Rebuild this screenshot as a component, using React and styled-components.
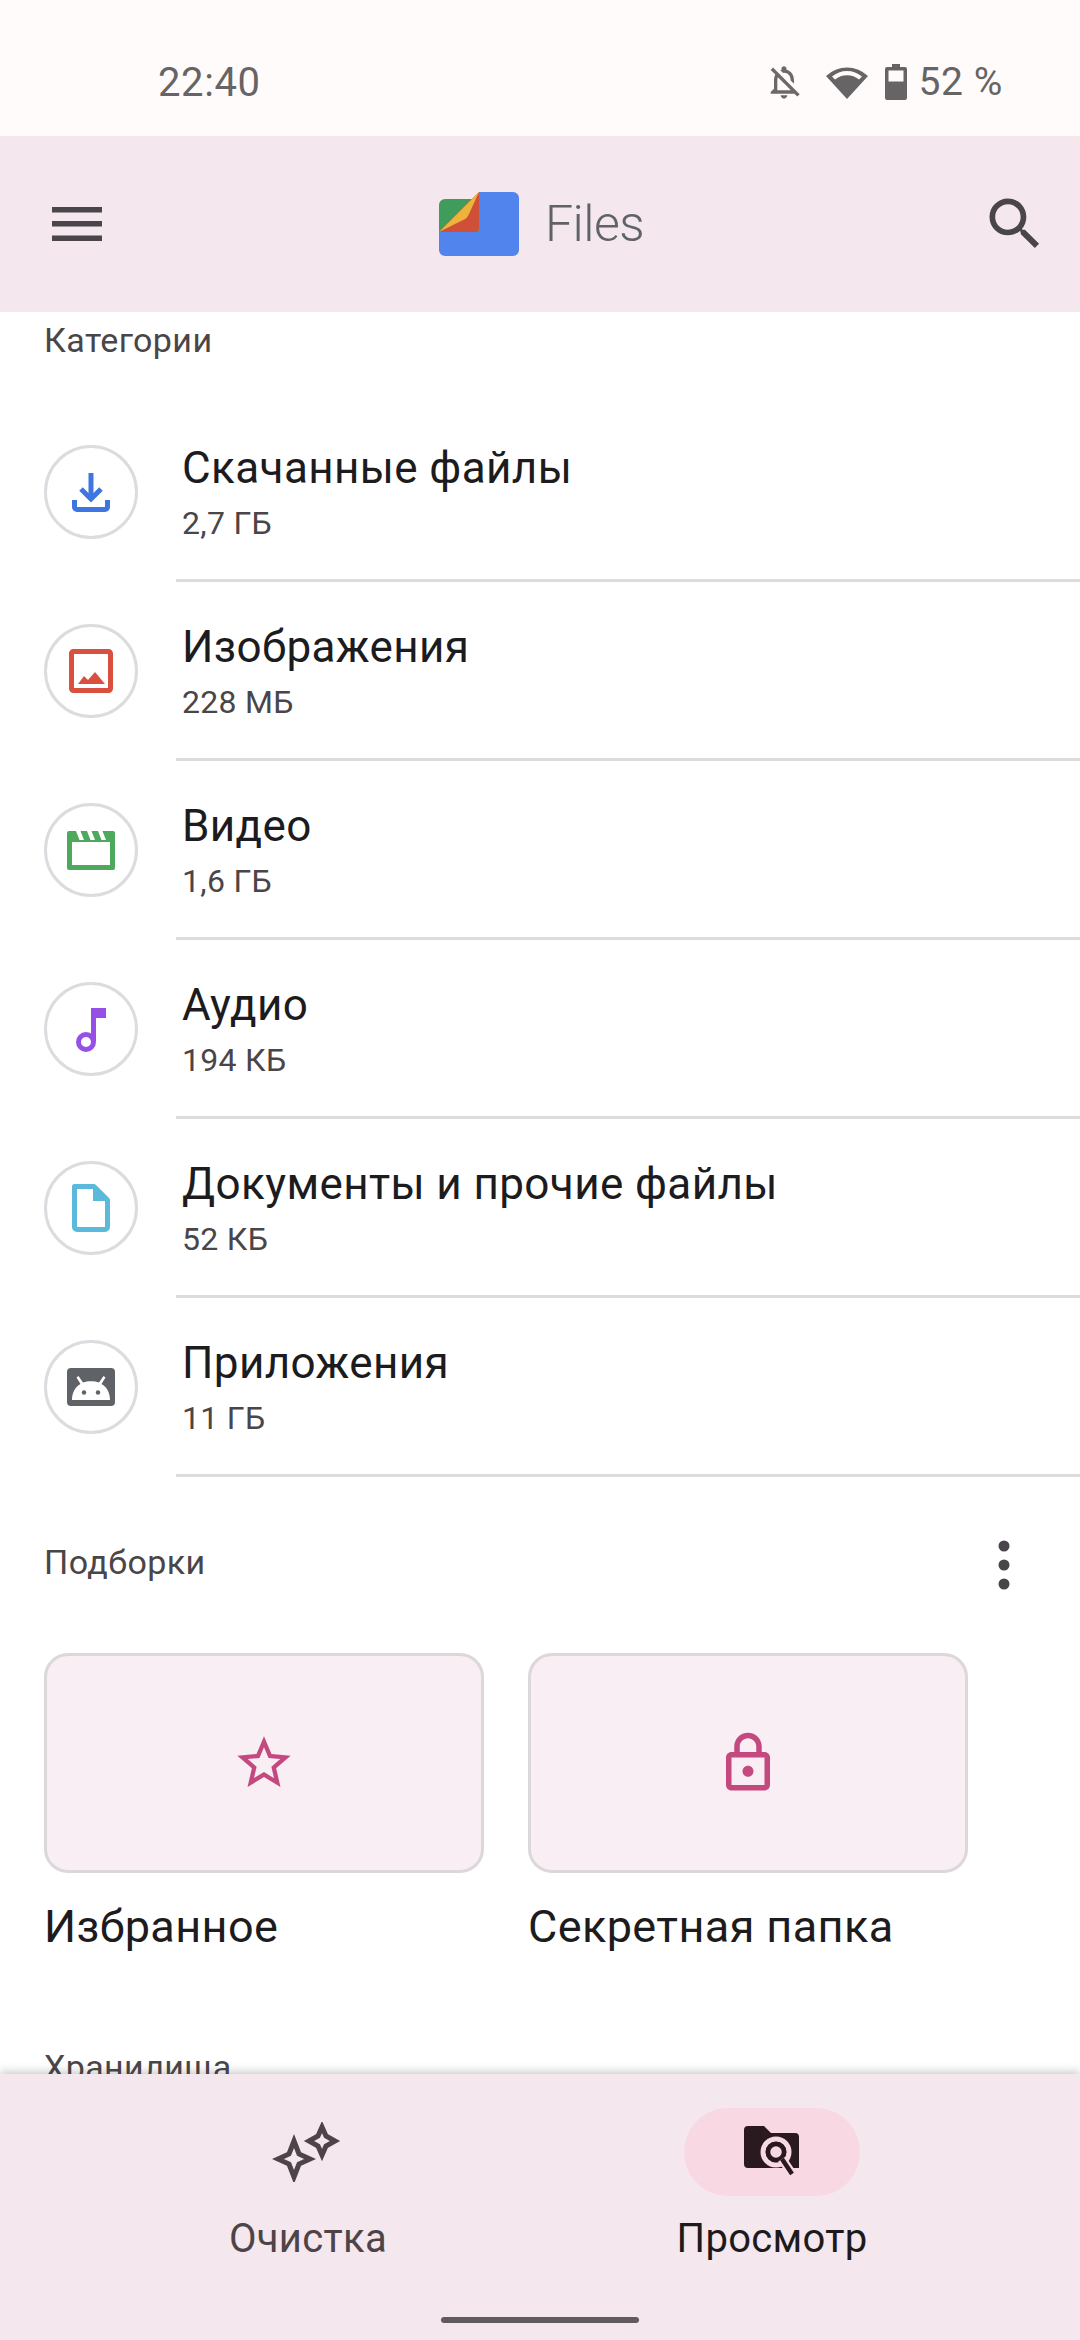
import React from "react";
import styled, { createGlobalStyle } from "styled-components";

const GlobalStyle = createGlobalStyle`
  html, body {
    margin: 0;
    padding: 0;
    background: #fff;
  }
  * {
    box-sizing: border-box;
  }
`;

const Screen = styled.div`
  width: 1080px;
  height: 2340px;
  display: flex;
  flex-direction: column;
  overflow: hidden;
  font-family: Roboto, "Noto Sans", sans-serif;
  background: #fff;
`;

const StatusBar = styled.div`
  height: 136px;
  flex: none;
  display: flex;
  align-items: center;
  justify-content: space-between;
  padding: 28px 77px 0 158px;
  background: #fffbfa;
  color: #666464;
`;

const Clock = styled.span`
  font-size: 40px;
  letter-spacing: 0.6px;
`;

const StatusIcons = styled.div`
  display: flex;
  align-items: center;
`;

const BatteryText = styled.span`
  font-size: 39px;
  margin-left: 12px;
  letter-spacing: 0.6px;
`;

const AppBar = styled.header`
  height: 176px;
  flex: none;
  display: flex;
  align-items: center;
  justify-content: space-between;
  padding: 0 31px 0 52px;
  background: #f4e7ee;
`;

const Brand = styled.div`
  display: flex;
  align-items: center;
  gap: 26px;
`;

const BrandName = styled.span`
  font-size: 50px;
  font-weight: 300;
  color: #5f6368;
  letter-spacing: -0.6px;
`;

const Content = styled.main`
  flex: 1;
  min-height: 0;
  overflow: hidden;
`;

const SectionLabel = styled.div`
  height: ${(p) => p.$height}px;
  padding: ${(p) => p.$top}px 44px 0;
  font-size: 34px;
  line-height: 44px;
  color: #4a4548;
  letter-spacing: 0.4px;
`;

const MoreRow = styled.div`
  height: 176px;
  display: flex;
  justify-content: space-between;
  padding: 63px 69px 0 44px;
  font-size: 34px;
  line-height: 44px;
  color: #4a4548;
  letter-spacing: 0.4px;
`;

const Row = styled.div`
  height: 179px;
  display: flex;
  align-items: stretch;
  padding-left: 44px;
`;

const IconCircle = styled.div`
  width: 94px;
  height: 94px;
  margin-top: 42px;
  margin-right: 38px;
  flex: none;
  display: flex;
  align-items: center;
  justify-content: center;
  border: 3px solid #dcdce0;
  border-radius: 50%;
`;

const RowBody = styled.div`
  flex: 1;
  padding: 37px 0 0 6px;
  border-bottom: 3px solid #dcdcdc;
`;

const RowTitle = styled.div`
  font-size: 44px;
  line-height: 56px;
  color: #1c1b1d;
  letter-spacing: 0.4px;
`;

const RowSize = styled.div`
  margin-top: 6px;
  font-size: 32px;
  line-height: 42px;
  color: #4a4548;
  letter-spacing: 0.3px;
`;

const Cards = styled.div`
  display: flex;
  gap: 44px;
  padding-left: 44px;
`;

const CardColumn = styled.div`
  width: 440px;
`;

const Card = styled.div`
  height: 220px;
  display: flex;
  align-items: center;
  justify-content: center;
  background: #f8eef3;
  border: 3px solid #dcd8da;
  border-radius: 24px;
`;

const CardCaption = styled.div`
  margin-top: 26px;
  font-size: 45px;
  line-height: 56px;
  color: #1c1b1d;
  letter-spacing: 0.4px;
`;

const BottomNav = styled.nav`
  height: 266px;
  flex: none;
  position: relative;
  display: grid;
  grid-template-columns: 464px 464px;
  justify-content: center;
  padding-top: 34px;
  background: #f4e7ee;
  box-shadow: 0 -2px 9px rgba(40, 50, 50, 0.28);
`;

const NavItem = styled.div`
  display: flex;
  flex-direction: column;
  align-items: center;
`;

const NavPill = styled.div`
  width: 176px;
  height: 88px;
  display: flex;
  align-items: center;
  justify-content: center;
  border-radius: 44px;
  background: ${(p) => (p.$active ? "#f7d8e3" : "transparent")};
`;

const NavLabel = styled.span`
  margin-top: 18px;
  font-size: 40px;
  line-height: 50px;
  letter-spacing: 0.3px;
  color: ${(p) => (p.$active ? "#1d1a1c" : "#4e4448")};
`;

const HomeBar = styled.div`
  position: absolute;
  left: 441px;
  bottom: 17px;
  width: 198px;
  height: 6px;
  border-radius: 3px;
  background: #625b5e;
`;

const WifiIcon = styled.svg`
  margin-left: 22px;
`;

const BatteryIcon = styled.svg`
  margin-left: 17px;
`;

const BellOff = () => (
  <svg width="40" height="40" viewBox="0 0 24 24" fill="#6b6969">
    <path d="M12 22c1.1 0 2-.9 2-2h-4c0 1.1.9 2 2 2zm0-15.5c2.49 0 4 2.02 4 4.5v.1l2 2V11c0-3.07-1.63-5.64-4.5-6.32V4c0-.83-.67-1.5-1.5-1.5s-1.5.67-1.5 1.5v.68c-.24.06-.47.15-.69.23l1.64 1.64c.18-.02.36-.05.55-.05zM5.41 3.35L4 4.76l2.81 2.81C6.29 8.57 6 9.74 6 11v5l-2 2v1h14.24l1.74 1.74 1.41-1.41L5.41 3.35zM16 17H8v-6c0-.68.12-1.32.34-1.9L16 16.76V17z" />
  </svg>
);

const Wifi = () => (
  <WifiIcon width="42" height="36" viewBox="0 0 42 36">
    <path d="M21 35 L0 12 A30 30 0 0 1 42 12 Z" fill="#666464" />
    <path d="M6 12.5 A23 23 0 0 1 36 12.5 L33 15.5 A19 19 0 0 0 9 15.5 Z" fill="#fffbfa" />
  </WifiIcon>
);

const Battery = () => (
  <BatteryIcon width="22" height="36" viewBox="0 0 22 36">
    <path d="M7 0h8v3h5a2 2 0 0 1 2 2v29a2 2 0 0 1-2 2H2a2 2 0 0 1-2-2V5a2 2 0 0 1 2-2h5z" fill="#666464" />
    <rect x="3.5" y="6.5" width="15" height="11" fill="#fffbfa" />
  </BatteryIcon>
);

const MenuIcon = () => (
  <svg width="50" height="34" viewBox="0 0 50 34" fill="#49454a">
    <rect width="50" height="5.5" />
    <rect y="14" width="50" height="5.5" />
    <rect y="28.5" width="50" height="5.5" />
  </svg>
);

// Document with the corner folded over, in the product colours
const FilesLogo = () => (
  <svg width="80" height="64" viewBox="0 0 80 64">
    <path d="M0 40V13a6 6 0 0 1 6-6h30l4 33z" fill="#3f9c5b" />
    <path d="M40 0H74a6 6 0 0 1 6 6V58a6 6 0 0 1-6 6H6a6 6 0 0 1-6-6V40H40z" fill="#5284ee" />
    <path d="M40 0V36a4 4 0 0 1-4 4H0z" fill="#cf4f38" />
    <path d="M0 40L40 0 30 22q-2 5-7 6.500z" fill="#edb33a" />
  </svg>
);

const SearchIcon = () => (
  <svg width="68" height="68" viewBox="0 0 24 24" fill="#49454a">
    <path d="M15.5 14h-.79l-.28-.27C15.41 12.59 16 11.11 16 9.5 16 5.91 13.09 3 9.5 3S3 5.91 3 9.5 5.91 16 9.5 16c1.61 0 3.09-.59 4.23-1.57l.27.28v.79l5 4.99L20.49 19l-4.99-5zm-6 0C7.01 14 5 11.99 5 9.5S7.01 5 9.5 5 14 7.01 14 9.5 11.99 14 9.5 14z" />
  </svg>
);

const CategoryIcon = ({ children }) => (
  <svg width="60" height="60" viewBox="0 0 60 60">
    {children}
  </svg>
);

const DownloadGlyph = () => (
  <CategoryIcon>
    <g fill="none" stroke="#3e75e0" strokeWidth="5">
      <path d="M30 11V38" />
      <path d="M20 27L30 37 40 27" />
      <path d="M13.500 38V45a2.500 2.500 0 0 0 2.500 2.500H44a2.500 2.500 0 0 0 2.500-2.500V38" />
    </g>
  </CategoryIcon>
);

const ImageGlyph = () => (
  <CategoryIcon>
    <rect x="10.500" y="10.500" width="39" height="39" rx="2" fill="none" stroke="#d9503f" strokeWidth="5" />
    <path d="M17 43l6-8 4 4 7-8 10 12z" fill="#d9503f" />
  </CategoryIcon>
);

const VideoGlyph = () => (
  <CategoryIcon>
    <path d="M8 11h44a2 2 0 0 1 2 2v35a2 2 0 0 1-2 2H8a2 2 0 0 1-2-2V13a2 2 0 0 1 2-2z" fill="#4fa95c" />
    <rect x="11" y="22" width="38" height="23" fill="#fff" />
    <path d="M15 11l3.500 9h4.500l-3.500-9zM26 11l3.500 9h4.500l-3.500-9zM37 11l3.500 9h4.500l-3.500-9z" fill="#fff" />
  </CategoryIcon>
);

const AudioGlyph = () => (
  <CategoryIcon>
    <path d="M30 9H45V19H35V42H30z" fill="#9650e6" />
    <circle cx="25" cy="43" r="7.500" fill="none" stroke="#9650e6" strokeWidth="5" />
  </CategoryIcon>
);

const DocGlyph = () => (
  <CategoryIcon>
    <path d="M13.500 8.500H33L46.500 22V49a2.500 2.500 0 0 1-2.500 2.500H16a2.500 2.500 0 0 1-2.500-2.500z" fill="none" stroke="#5bb9dc" strokeWidth="5" strokeLinejoin="round" />
    <path d="M32 8L47 23H32z" fill="#5bb9dc" />
  </CategoryIcon>
);

const AndroidGlyph = () => (
  <CategoryIcon>
    <rect x="6" y="11" width="48" height="38" rx="4" fill="#5f6368" />
    <path d="M11 43C11 36 14 30 19.500 27L15.500 20.500 17.500 19 22 25.500C26.500 23.800 33.500 23.800 38 25.500L42.500 19 44.500 20.500 40.500 27C46 30 49 36 49 43z" fill="#fff" />
    <circle cx="23" cy="35.500" r="2.200" fill="#5f6368" />
    <circle cx="37" cy="35.500" r="2.200" fill="#5f6368" />
  </CategoryIcon>
);

const MoreDots = () => (
  <svg width="14" height="50" viewBox="0 0 14 50" fill="#49454a">
    <circle cx="7" cy="6" r="5.500" />
    <circle cx="7" cy="25" r="5.500" />
    <circle cx="7" cy="44" r="5.500" />
  </svg>
);

const StarOutline = () => (
  <svg width="64" height="64" viewBox="0 0 24 24" fill="#c4497f">
    <path d="M22 9.240l-7.190-.620L12 2 9.190 8.630 2 9.240l5.460 4.730L5.820 21 12 17.270 18.180 21l-1.630-7.030L22 9.240zM12 15.400l-3.760 2.270 1-4.280-3.320-2.880 4.380-.380L12 6.100l1.710 4.040 4.380.380-3.320 2.880 1 4.280L12 15.400z" />
  </svg>
);

const LockOutline = () => (
  <svg width="66" height="66" viewBox="0 0 24 24" fill="#c4497f">
    <path d="M18 8h-1V6c0-2.760-2.240-5-5-5S7 3.240 7 6v2H6c-1.100 0-2 .9-2 2v10c0 1.100.9 2 2 2h12c1.100 0 2-.9 2-2V10c0-1.100-.9-2-2-2zM9 6c0-1.660 1.340-3 3-3s3 1.340 3 3v2H9V6zm9 14H6V10h12v10zm-6-3c1.100 0 2-.9 2-2s-.9-2-2-2-2 .9-2 2 .9 2 2 2z" />
  </svg>
);

const Sparkles = () => (
  <svg width="72" height="60" viewBox="0 0 72 60" fill="none" stroke="#4e4448" strokeWidth="5" strokeLinejoin="miter">
    <path d="M22 19L27 32 38 37 27 42 22 55 17 42 6 37 17 32z" />
    <path d="M50 5L54 14 63 19 54 24 50 33 46 24 37 19 46 14z" />
  </svg>
);

const FolderSearch = () => (
  <svg width="56" height="52" viewBox="0 0 56 52">
    <path d="M4 0H20L27 7H51a4 4 0 0 1 4 4V42H4a4 4 0 0 1-4-4V4a4 4 0 0 1 4-4z" fill="#2a1a20" />
    <circle cx="32" cy="26" r="13" fill="none" stroke="#f7d8e3" strokeWidth="5" />
    <circle cx="32" cy="26" r="9" fill="#f7d8e3" />
    <circle cx="32" cy="26" r="8" fill="none" stroke="#2a1a20" strokeWidth="4.500" />
    <path d="M38 33L48 48" stroke="#f7d8e3" strokeWidth="9" />
    <path d="M38 33L48 48" stroke="#2a1a20" strokeWidth="4.500" />
  </svg>
);

const categories = [
  { title: "Скачанные файлы", size: "2,7 ГБ", Icon: DownloadGlyph },
  { title: "Изображения", size: "228 МБ", Icon: ImageGlyph },
  { title: "Видео", size: "1,6 ГБ", Icon: VideoGlyph },
  { title: "Аудио", size: "194 КБ", Icon: AudioGlyph },
  { title: "Документы и прочие файлы", size: "52 КБ", Icon: DocGlyph },
  { title: "Приложения", size: "11 ГБ", Icon: AndroidGlyph },
];

const App = () => {
  return (
    <Screen>
      <GlobalStyle />
      <StatusBar>
        <Clock>22:40</Clock>
        <StatusIcons>
          <BellOff />
          <Wifi />
          <Battery />
          <BatteryText>52 %</BatteryText>
        </StatusIcons>
      </StatusBar>
      <AppBar>
        <MenuIcon />
        <Brand>
          <FilesLogo />
          <BrandName>Files</BrandName>
        </Brand>
        <SearchIcon />
      </AppBar>
      <Content>
        <SectionLabel $height={91} $top={6}>Категории</SectionLabel>
        {categories.map(({ title, size, Icon }) => (
          <Row key={title}>
            <IconCircle>
              <Icon />
            </IconCircle>
            <RowBody>
              <RowTitle>{title}</RowTitle>
              <RowSize>{size}</RowSize>
            </RowBody>
          </Row>
        ))}
        <MoreRow>
          <span>Подборки</span>
          <MoreDots />
        </MoreRow>
        <Cards>
          <CardColumn>
            <Card>
              <StarOutline />
            </Card>
            <CardCaption>Избранное</CardCaption>
          </CardColumn>
          <CardColumn>
            <Card>
              <LockOutline />
            </Card>
            <CardCaption>Секретная папка</CardCaption>
          </CardColumn>
        </Cards>
        <SectionLabel $height={110} $top={90}>Хранилища</SectionLabel>
      </Content>
      <BottomNav>
        <NavItem>
          <NavPill>
            <Sparkles />
          </NavPill>
          <NavLabel>Очистка</NavLabel>
        </NavItem>
        <NavItem>
          <NavPill $active>
            <FolderSearch />
          </NavPill>
          <NavLabel $active>Просмотр</NavLabel>
        </NavItem>
        <HomeBar />
      </BottomNav>
    </Screen>
  );
};

export default App;
